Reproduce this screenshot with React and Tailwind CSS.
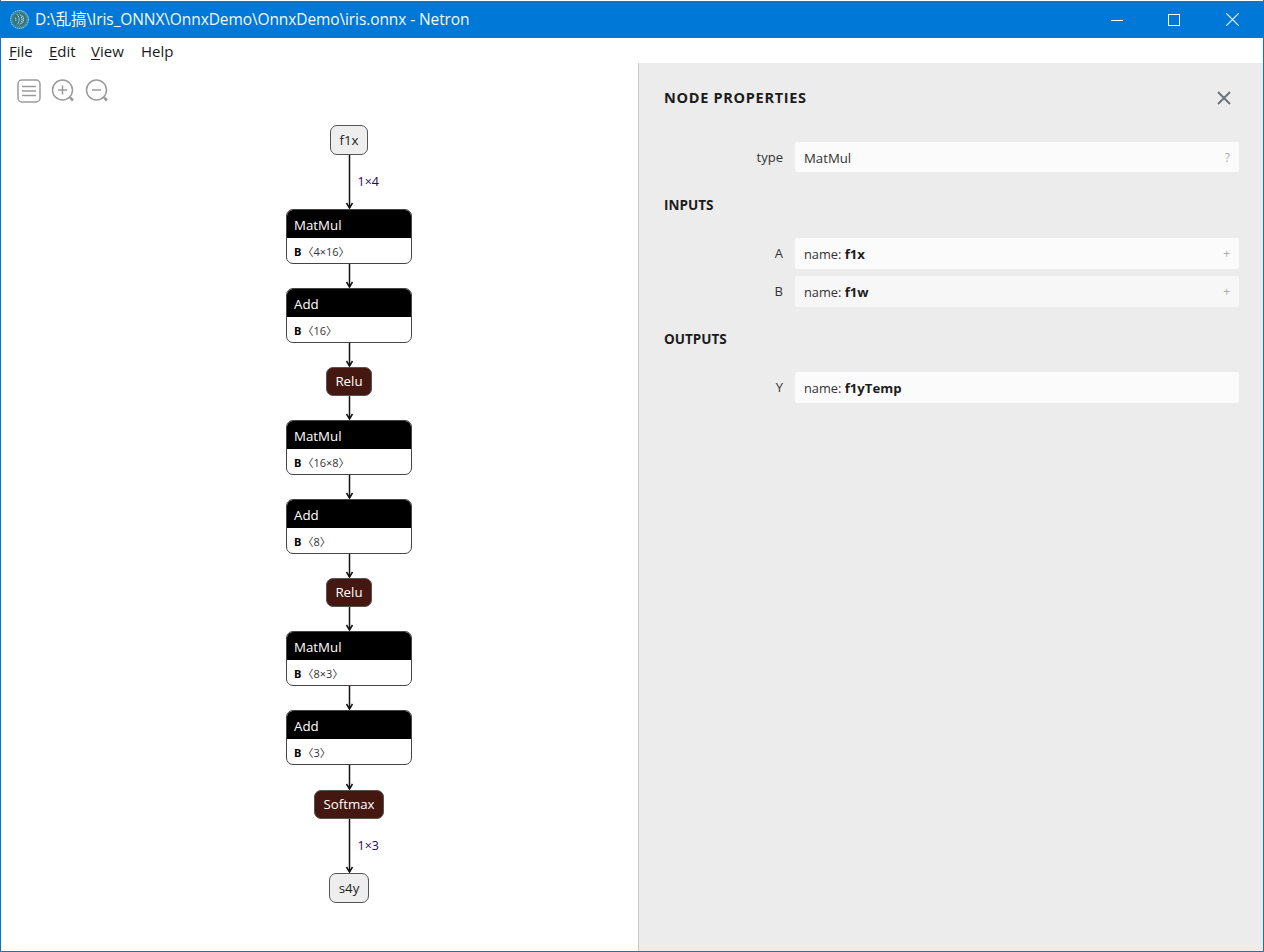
const uiFont = { fontFamily: '"Open Sans", "Noto Sans CJK SC", sans-serif' };

function Logo() {
  return (
    <svg viewBox="0 0 20 20" className="h-[19px] w-[19px]" fill="none">
      <circle cx="10" cy="10" r="9.4" fill="#3f8792" stroke="#e6f0f2" strokeWidth="0.9" strokeDasharray="1.4 0.9" />
      <circle cx="10" cy="10" r="7" fill="#2f7480" />
      <path d="M7 4.500c3.500 2 3.500 9 0 11M10 4c3.500 2.500 3.500 9.500 0 12M13 6c1.500 2.500 1.500 5.500 0 8M5.500 8c1 1.200 1 2.800 0 4" stroke="#e8f4f6" strokeWidth="1" strokeDasharray="1.300 0.800" />
    </svg>
  );
}

function TitleBar() {
  return (
    <div className="flex h-[37px] shrink-0 items-center bg-[#0078d7] pl-[9px] text-white">
      <Logo />
      <span className="ml-[6px] text-[15.500px] tracking-[-0.1px] text-[#f4f9fd]" style={uiFont}>
        D:\乱搞\Iris_ONNX\OnnxDemo\OnnxDemo\iris.onnx - Netron
      </span>
      <div className="ml-auto flex items-center">
        <svg viewBox="0 0 12 12" className="mr-[45px] h-[12px] w-[12px]" stroke="white" strokeWidth="1" fill="none">
          <path d="M0 6.500h12" />
        </svg>
        <svg viewBox="0 0 12 12" className="mr-[46px] h-[12px] w-[12px]" stroke="white" strokeWidth="1" fill="none">
          <rect x="0.500" y="0.500" width="11" height="11" />
        </svg>
        <svg viewBox="0 0 12 12" className="mr-[24px] h-[13px] w-[13px]" stroke="white" strokeWidth="1" fill="none">
          <path d="M0 0l12 12M12 0L0 12" />
        </svg>
      </div>
    </div>
  );
}

function MenuBar() {
  const items = [
    ['F', 'ile', 'w-[40px]'],
    ['E', 'dit', 'w-[42px]'],
    ['V', 'iew', 'w-[50px]'],
    ['H', 'elp', 'w-[50px]'],
  ];
  return (
    <div className="flex h-[25px] shrink-0 items-center bg-white pl-[8px] pt-[2px] text-[15px] text-[#1a1a1a]" style={uiFont}>
      {items.map(([key, rest, width]) => (
        <span key={key} className={width}>
          {key === 'H' ? key : <span className="underline underline-offset-2">{key}</span>}
          {rest}
        </span>
      ))}
    </div>
  );
}

function Toolbar() {
  return (
    <div className="absolute left-[16px] top-[16px] flex items-center gap-[10px]">
      <svg viewBox="0 0 24 24" className="h-[24px] w-[24px]" fill="none" stroke="#9a9a9a">
        <rect x="1" y="1" width="22" height="22" rx="4" strokeWidth="1.500" />
        <path d="M5 7.500h14M5 12h14M5 16.500h14" strokeWidth="1.500" />
      </svg>
      <svg viewBox="0 0 24 24" className="h-[24px] w-[24px]" fill="none" stroke="#9a9a9a" strokeWidth="1.500">
        <circle cx="11.500" cy="11" r="10" />
        <path d="M7 11h9M11.500 6.500v9" />
        <path d="M19 18.500l3 3" strokeWidth="2.500" />
      </svg>
      <svg viewBox="0 0 24 24" className="h-[24px] w-[24px]" fill="none" stroke="#9a9a9a" strokeWidth="1.500">
        <circle cx="11.500" cy="11" r="10" />
        <path d="M7 11h9" />
        <path d="M19 18.500l3 3" strokeWidth="2.500" />
      </svg>
    </div>
  );
}

function Edge({ height, label }) {
  return (
    <div className="relative w-[9px] shrink-0" style={{ height }}>
      <svg viewBox={`0 0 9 ${height}`} className="block h-full w-full" fill="none" stroke="#111" strokeWidth="1.500">
        <path d={`M4.500 0V${height - 1}`} />
        <path d={`M1.500 ${height - 6}L4.500 ${height - 1}L7.500 ${height - 6}`} />
      </svg>
      {label && (
        <span className="absolute left-[13px] top-[19px] whitespace-nowrap text-[12.500px] leading-[16px] text-[#2e0060]" style={uiFont}>
          {label}
        </span>
      )}
    </div>
  );
}

function IoNode({ label, width, height }) {
  return (
    <div
      className="flex shrink-0 items-center justify-center rounded-[7px] border-[1.500px] border-[#555] bg-[#eeeeee] pt-[2px] text-[13.300px] text-[#222]"
      style={{ ...uiFont, width, height }}
    >
      {label}
    </div>
  );
}

function ActivationNode({ label, width }) {
  return (
    <div
      className="flex h-[29px] shrink-0 items-center justify-center rounded-[7px] border-[1.500px] border-[#555] bg-[#441811] pt-[1px] text-[13.300px] text-white"
      style={{ ...uiFont, width }}
    >
      {label}
    </div>
  );
}

function OpNode({ label, shape }) {
  return (
    <div className="h-[55px] w-[126px] shrink-0 overflow-hidden rounded-[7px] border-[1.500px] border-[#444] bg-white" style={uiFont}>
      <div className="flex h-[28px] items-center bg-black pl-[7px] pt-[3px] text-[13.300px] text-white">{label}</div>
      <div className="flex h-[25px] items-center pl-[7px] pt-[4px] text-[11px] text-[#222]">
        <span className="font-bold text-black">B</span>
        <span className="ml-[1px] text-[#333]">〈{shape}〉</span>
      </div>
    </div>
  );
}

function Graph() {
  return (
    <div className="flex flex-col items-center pl-[59px] pt-[62px]">
      <IoNode label="f1x" width={38} height={30} />
      <Edge height={54} label="1×4" />
      <OpNode label="MatMul" shape="4×16" />
      <Edge height={24} />
      <OpNode label="Add" shape="16" />
      <Edge height={24} />
      <ActivationNode label="Relu" width={46} />
      <Edge height={24} />
      <OpNode label="MatMul" shape="16×8" />
      <Edge height={24} />
      <OpNode label="Add" shape="8" />
      <Edge height={24} />
      <ActivationNode label="Relu" width={46} />
      <Edge height={24} />
      <OpNode label="MatMul" shape="8×3" />
      <Edge height={24} />
      <OpNode label="Add" shape="3" />
      <Edge height={25} />
      <ActivationNode label="Softmax" width={70} />
      <Edge height={54} label="1×3" />
      <IoNode label="s4y" width={40} height={30} />
    </div>
  );
}

function SectionTitle({ children, className }) {
  return <div className={`pl-[25px] text-[13.500px] font-bold leading-[18px] text-[#1c1c1c] ${className}`}>{children}</div>;
}

function PropRow({ label, mark, shade = 'bg-[#fbfbfb]', rowHeight = 'h-[31px]', children, className = '' }) {
  return (
    <div className={`flex ${className}`}>
      <div className="w-[156px] pr-[12px] pt-[6px] text-right text-[13px] leading-[18px] text-[#333]">{label}</div>
      <div className={`flex w-[444px] items-center rounded-[2px] pl-[9px] pr-[9px] pt-[3px] text-[13.200px] text-[#333] ${rowHeight} ${shade}`}>
        <span>{children}</span>
        <span className="ml-auto -translate-y-px text-[12px] text-[#aaa]">{mark}</span>
      </div>
    </div>
  );
}

function NameValue({ value }) {
  return (
    <>
      <span className="text-[12.800px]">name: </span>
      <b className="font-bold text-[#1c1c1c]">{value}</b>
    </>
  );
}

function Sidebar() {
  return (
    <div className="w-[625px] shrink-0 border-l border-[#c8c8c8] bg-[#ececec] pt-[26px]" style={uiFont}>
      <div className="flex h-[18px] items-center pl-[25px] pr-[32px]">
        <span className="text-[14.500px] font-bold tracking-[0.7px] text-[#1c1c1c]">NODE PROPERTIES</span>
        <svg viewBox="0 0 14 14" className="ml-auto h-[14px] w-[14px]" fill="none" stroke="#66707a" strokeWidth="1.800">
          <path d="M1 1l12 12M13 1L1 13" />
        </svg>
      </div>
      <PropRow label="type" mark="?" rowHeight="h-[30px]" className="mt-[35px]">MatMul</PropRow>
      <SectionTitle className="mt-[24px]">INPUTS</SectionTitle>
      <PropRow label="A" mark="+" className="mt-[24px]">
        <NameValue value="f1x" />
      </PropRow>
      <PropRow label="B" mark="+" shade="bg-[#f7f7f7]" className="mt-[7px]">
        <NameValue value="f1w" />
      </PropRow>
      <SectionTitle className="mt-[23px]">OUTPUTS</SectionTitle>
      <PropRow label="Y" className="mt-[24px]">
        <NameValue value="f1yTemp" />
      </PropRow>
    </div>
  );
}

export default function App() {
  return (
    <div className="flex h-[952px] w-[1264px] flex-col overflow-hidden border border-t-0 border-[#0078d7] bg-white pt-px">
      <TitleBar />
      <MenuBar />
      <div className="flex min-h-0 flex-1">
        <div className="relative w-[637px] shrink-0 bg-white">
          <Toolbar />
          <Graph />
        </div>
        <Sidebar />
      </div>
    </div>
  );
}
